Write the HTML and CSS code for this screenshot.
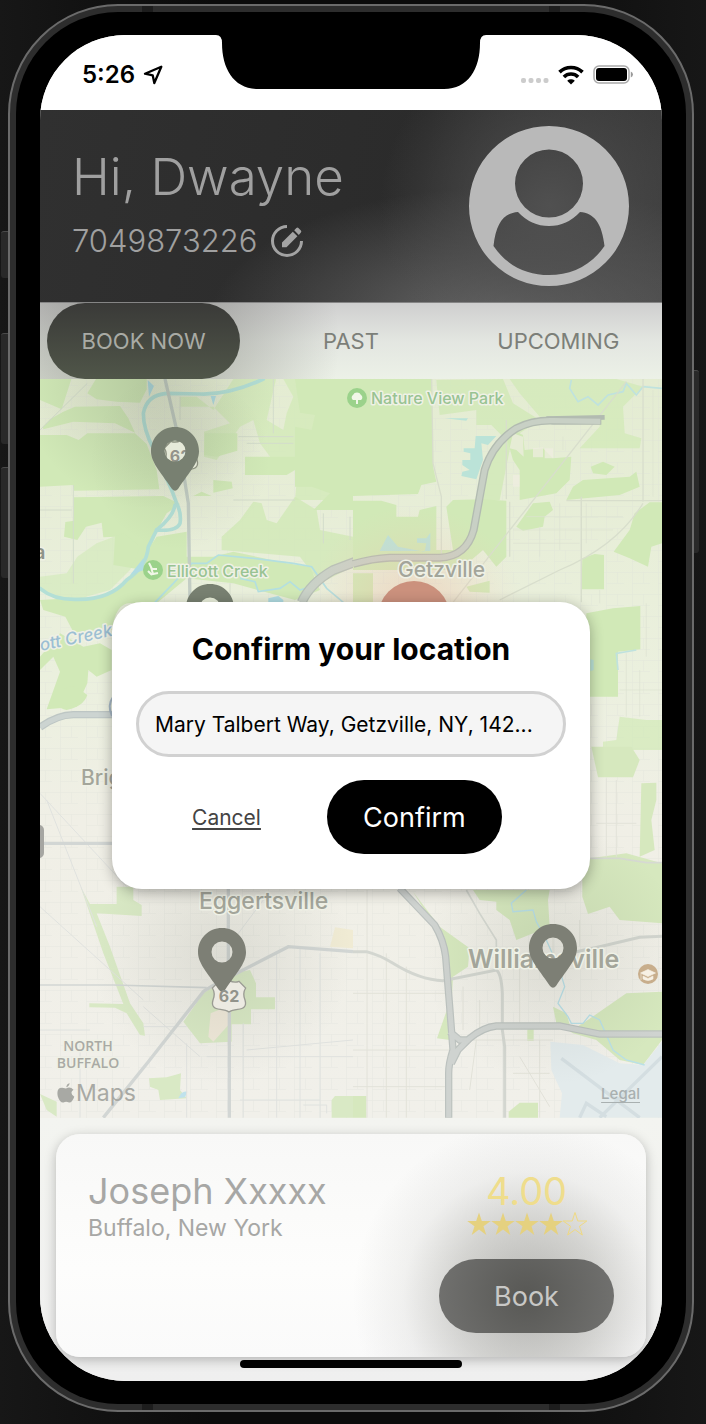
FILE: index.html
```html
<!DOCTYPE html>
<html lang="en">
<head>
<meta charset="utf-8">
<meta name="viewport" content="width=device-width, initial-scale=1">
<title>Confirm your location</title>
<link rel="stylesheet" href="styles.css">
</head>
<body>
<div class="phone">
  <span class="side side-mute"></span>
  <span class="side side-up"></span>
  <span class="side side-down"></span>
  <span class="side side-power"></span>
  <span class="band band-tl"></span><span class="band band-tr"></span>
  <span class="band band-bl"></span><span class="band band-br"></span>
  <div class="bezel">
    <div class="screen">
      <svg class="notch" viewBox="0 0 270 54" aria-hidden="true"><path d="M0 0H270Q264 0 264 8C264 34 252 54 228 54H42C18 54 6 34 6 8Q6 0 0 0Z"/></svg>

      <div class="status">
        <div class="status-time">
          <span>5:26</span>
          <svg width="20" height="20" viewBox="0 0 20 20" aria-hidden="true"><path d="M18.300 1.700 2 8.700 9.700 10.300 11.300 18Z" fill="none" stroke="#000" stroke-width="2.300" stroke-linejoin="round"/></svg>
        </div>
        <div class="status-icons">
          <svg width="28" height="6" viewBox="0 0 28 6" aria-hidden="true"><g fill="#ccc"><rect width="5" height="5" rx="2"/><rect x="7.500" width="5" height="5" rx="2"/><rect x="15" width="5" height="5" rx="2"/><rect x="22.500" width="5" height="5" rx="2"/></g></svg>
          <svg class="wifi" width="26" height="20" viewBox="0 0 26 20" aria-hidden="true"><g fill="none" stroke="#000" stroke-width="3.600"><path d="M1.500 7.100a16.500 16.500 0 0 1 23 0"/><path d="M5.900 12a10 10 0 0 1 14.200 0"/></g><path d="M9.200 15.700a5.600 5.600 0 0 1 7.600 0L13 19.500Z"/></svg>
          <svg width="41" height="20" viewBox="0 0 41 20" aria-hidden="true"><rect x="1" y="1" width="35" height="17" rx="5" fill="none" stroke="#a9a9a9" stroke-width="1.500"/><rect x="3" y="3" width="31" height="13" rx="3"/><path d="M37.800 6.500q2.200.8 2.200 3t-2.200 3Z" fill="#999"/></svg>
        </div>
      </div>

      <header class="profile">
        <div class="profile-text">
          <h1>Hi, Dwayne</h1>
          <div class="profile-phone">
            <span>7049873226</span>
            <button class="edit" aria-label="Edit phone number">
              <svg width="34" height="34" viewBox="0 0 34 34" aria-hidden="true"><path d="M17 2.500A14.500 14.500 0 1 0 31.500 17" fill="none" stroke="#a3a3a3" stroke-width="3"/><path d="M12 23.300V18.500L22.800 7.700 27.400 12.300 16.500 23.300ZM24.200 6.300 26.400 4q1-.9 2 0l2.500 2.500q.9 1 0 2L28.800 10.900Z" fill="#a3a3a3"/></svg>
            </button>
          </div>
        </div>
        <svg class="avatar" viewBox="0 0 160 160" role="img" aria-label="Profile picture"><path fill="#b9b9b9" fill-rule="evenodd" d="M80 0a80 80 0 1 1 0 160a80 80 0 1 1 0-160ZM80 23.500a34 34 0 1 0 0 68a34 34 0 1 0 0-68ZM49 86C35 87 27 97 24.500 120C38 140 58 149 80 149S122 140 135.500 120C133 97 125 87 111 86Q98 100 80 100T49 86Z"/></svg>
      </header>

      <nav class="tabs">
        <button class="tab tab-active">BOOK NOW</button>
        <button class="tab">PAST</button>
        <button class="tab">UPCOMING</button>
      </nav>

      <section class="map" aria-label="Map">
        <svg class="map-art" viewBox="40 379 622 739" preserveAspectRatio="xMidYMid slice" aria-hidden="true">
          <defs>
            <linearGradient id="land" x1="0" y1="0" x2="0" y2="1">
              <stop offset="0" stop-color="#e4ecd2"/><stop offset=".4" stop-color="#ebf0de"/><stop offset=".6" stop-color="#f0efe6"/><stop offset="1" stop-color="#f1f0ea"/>
            </linearGradient>
            <radialGradient id="dim"><stop offset="0" stop-color="#444a3c" stop-opacity=".2"/><stop offset="1" stop-color="#444a3c" stop-opacity="0"/></radialGradient>
            <radialGradient id="warm"><stop offset="0" stop-color="#f2a58c" stop-opacity=".4"/><stop offset="1" stop-color="#f2c8b4" stop-opacity="0"/></radialGradient>
            <pattern id="streets" width="26" height="22" patternUnits="userSpaceOnUse"><path d="M0 .5H26M8.500 0V22M19.500 0V11M8 11.500H26" fill="none" stroke="#dcdfd8" stroke-width=".6"/></pattern>
            <path id="pin" d="M0-24C13.500-24 24-13.500 24 0C24 11 16 19 3 38Q0 41.500-3 38C-16 19-24 11-24 0C-24-13.500-13.500-24 0-24ZM0-10.500A10.500 10.500 0 1 0 0 10.500A10.500 10.500 0 1 0 0-10.500Z" fill-rule="evenodd"/>
            <path id="shield" d="M-30-44Q-16-38 0-47Q16-38 30-44L50-24Q40-8 48 12Q56 38 26 40Q8 42 0 48Q-8 42-26 40Q-56 38-48 12Q-40-8-50-24Z"/>
          </defs>
          <rect x="40" y="379" width="622" height="739" fill="url(#land)"/>
          <rect x="40" y="379" width="622" height="739" fill="url(#streets)" opacity=".45"/>

          <g transform="translate(0 370) scale(.333333)">
            <g fill="#d1e9b7">
              <path d="M120 27H214L185 118 120 90Z"/><path d="M288 27H440V58L420 98 350 95 290 88 262 70Z"/><path d="M128 170 150 148 190 125 225 110 360 108 385 145 405 188 345 160 220 155 130 178Z"/>
              <path d="M120 195H200L236 210 262 190H405L440 222 470 300 478 358 222 362 218 345 120 350Z"/><path d="M222 382 490 378 540 402 500 430 472 480 430 600 340 585 345 500 310 502 305 458 258 470 232 510 192 500 196 456 222 452Z"/>
              <path d="M300 680C390 650 430 560 470 500L560 485V560L640 560 700 545 860 580 930 590 960 660 885 690 700 640 560 625 470 700H400Q350 690 335 780H300L222 790 196 740 130 720 120 690Z"/><path d="M120 620 200 610 232 560 290 520 370 490 420 530 390 600 330 660 190 700 120 660Z" opacity=".6"/>
              <path d="M540 80H590L640 120 700 27H828L800 150 850 180 860 130 880 80 850 27H1059V390H885L895 280 840 300 780 220 760 150 720 170 650 270 612 260V185L690 160 640 110 540 110Z" opacity=".75"/><path d="M615 190H712V242L650 260 612 255Z"/><path d="M735 260H885V300L860 315H735Z"/><path d="M640 330 695 335 698 355 640 368Z"/><path d="M580 378 605 365 635 378Z"/>
              <path d="M1059 27H885L900 128 945 135 935 180 885 170V350L935 350 990 370 940 420 1059 420Z"/><path d="M665 500 720 450 760 395 785 400 800 450 830 460 885 380 950 420 960 480 1059 500V590L960 640 900 560 665 540Z" opacity=".8"/>
              <path d="M120 860 180 790 250 830 300 820 335 840V900L290 920 265 900 262 940 230 1010 140 1018 180 905 160 860 120 900Z"/><path d="M160 980Q190 950 225 948L262 975Q250 1010 200 1020 160 1010 160 980Z"/>
            </g>
            <g fill="none" stroke="#b3dfd6" stroke-width="11" stroke-linecap="round"><path d="M790 27Q690 75 600 72L500 70Q440 75 430 130 430 180 462 240L515 360 530 400Q545 430 540 460 530 485 470 480L445 530Q440 590 380 630 330 690 230 688 160 690 120 655"/><path d="M525 405Q520 440 470 480"/></g>
            <g fill="none" stroke="#b3dfe0" stroke-width="5"><path d="M465 697 520 640 575 580 620 580 655 555 760 565 880 580 935 590 980 655 1030 697M720 625 765 635 775 665 840 655 870 635 900 660 930 650"/></g>
            <path d="M443 30 462 48 447 80ZM632 78H648L640 105ZM390 615 430 565 432 600ZM805 697V685L835 678 850 690V697Z" fill="#b0dce2"/>
            <g fill="none" stroke="#d3dccb" stroke-width="3"><path d="M120 180 262 40M220 345V640M120 420H215M715 200H880M740 220H880M700 390H885M540 80V150M970 430V520M1050 440V510M690 640V697M820 27V190"/></g>
            <path d="M495 27 530 180 565 400 570 697" fill="none" stroke="#c3cdc4" stroke-width="10"/>
            <path d="M905 697Q930 640 1000 600L1080 570" fill="none" stroke="#b7c0b7" stroke-width="30"/><path d="M905 697Q930 640 1000 600L1080 570" fill="none" stroke="#c9d1c7" stroke-width="22"/>
            <path d="M120 1072Q170 1035 220 1034H345" fill="none" stroke="#bdc6c4" stroke-width="22"/><path d="M120 1072Q170 1035 220 1034H345" fill="none" stroke="#ccd4d1" stroke-width="15"/>
          </g>

          <g transform="translate(353 370) scale(.333333)">
            <g fill="#d1e9b7">
              <path d="M0 27H236L240 290 250 335 205 345 195 372 0 378Z"/><path d="M0 392H85L130 405V440H195L200 420 250 408 250 540 300 540 280 410 300 390 390 388 460 392V560L430 590 390 540 320 600 0 600Z"/>
              <path d="M250 30 450 27 480 100 560 150 500 190 470 240 440 390H390L410 270 450 200 415 165H370V120L260 135Z" opacity=".8"/><path d="M460 200 480 180 510 195 515 240 570 235 600 265 655 260 650 330 610 370 500 390V300L480 270Z"/><path d="M470 27H790L870 50 810 110 815 190 865 205 860 235 680 235 740 170 740 140 560 140 500 70Z" opacity=".75"/>
              <path d="M640 390 660 350 690 330 830 320 850 305 860 350 800 375Z"/><path d="M713 290 750 275 785 290 760 315 720 310Z"/><path d="M490 470 540 400 590 395 600 420 575 440 570 470 510 482Z"/><path d="M890 397H927V520L895 530 885 590 830 565 782 545 830 480 845 430Z"/><path d="M688 565 725 552 753 555V658H685Z"/><path d="M700 730 780 715 862 708V838L795 845V980H700Z"/><path d="M340 650 410 632V668L350 665ZM0 610H60V697H0Z"/><path d="M800 1040 880 1050 927 1050V1140H750V1115L790 1110Z" opacity=".7"/>
            </g>
            <g fill="#f0eee2" opacity=".7"><path d="M480 190 510 200 512 260 490 240 470 235Z"/><path d="M540 235 570 232V262H540ZM575 235H600V265H575ZM480 315H500V350H480Z"/></g>
            <path d="M368 198H430L405 225 385 220 390 270 370 328 325 318 328 305 350 300 328 285V270H352V250L332 245V235H365ZM275 145H345L340 152ZM80 543 105 495 135 530 215 545 220 520 192 518V505H220L232 488V543ZM712 868 722 870V900L712 904Z" fill="#bbe3d8"/>
            <g fill="none" stroke="#bfe2de" stroke-width="5"><path d="M655 30 650 55 675 95 705 80 735 105 765 75 810 65 820 40 850 75 870 50 927 55M795 900 790 850 850 840"/></g>
            <g fill="none" stroke="#d8decc" stroke-width="4"><path d="M236 27 240 280 265 380V600M820 35 300 697M685 380V697M870 27V395M470 395V560M870 400Q790 530 620 600L440 690M460 150V388M640 392H927"/></g>
            <g fill="none" stroke="#dce2d2" stroke-width="2"><path d="M480 480H780M520 440H810M480 520H680M560 470V560M620 400V540M700 400V520M740 660V700M630 240V200M900 60V380M820 850V1040M860 900V1040M800 960H927M880 700V860"/></g>
            <path d="M0 582Q60 565 110 563H260Q340 560 362 480L395 300Q420 220 490 175 540 150 600 152L745 152" fill="none" stroke="#b2bbb1" stroke-width="24"/><path d="M580 146 755 142" fill="none" stroke="#b2bbb1" stroke-width="14"/>
            <path d="M-5 583Q60 565 110 563H260Q340 560 362 480L395 300Q420 220 490 175 540 150 600 152L742 154" fill="none" stroke="#c8d0c5" stroke-width="16"/>
          </g>

          <g transform="translate(0 740) scale(.333333)">
            <g fill="#d9e9c5"><path d="M350 440H400V480L425 495V528L290 520 330 620 390 790 430 850 435 887 420 885 380 820 345 803 268 802V790L370 792 310 640 242 440 270 492H350Z"/><path d="M700 700 750 690 768 730V772H825V808H753V853H695V905L600 910 550 845 610 760Z"/><path d="M447 1015 500 1012 543 1000 540 1050 560 1075 480 1080 475 1050 450 1040Z"/><path d="M120 1062 170 1085V1130L140 1110ZM1005 1068H1059V1133H995V1080Z"/></g>
            <path d="M1005 562 1059 570V625L990 620Z" fill="#f0ebd4"/><path d="M632 820 680 800 690 850 640 905 625 890Z" fill="#f0e9da"/>
            <path d="M535 1075Q545 1050 562 1055L555 1072Z" fill="#c0e2ec"/>
            <g fill="none" stroke="#e0e2df" stroke-width="3"><path d="M120 160 380 440M140 180 290 560M120 500 430 780M700 600 790 480M430 800 600 950M240 900V1133M730 850V1133M830 640V1133M560 910V1133M900 620V1133M960 640V1133M620 950H1059M120 870H270M430 860H560M740 930 1059 900M720 1080 960 1080M910 1095H980V1120"/></g>
            <g fill="none" stroke="#d2d6d4" stroke-width="10"><path d="M132 310H345M685 440V700M688 815V1133"/><path d="M1059 635 865 620 710 700Q630 740 610 755L445 965 310 1133"/></g>
            <path d="M120 735 340 735 620 743" fill="none" stroke="#d2d6d4" stroke-width="5"/>
          </g>

          <g transform="translate(353 740) scale(.333333)">
            <g fill="#d6e8be"><path d="M715 20H835L860 60 840 112H735Z"/><path d="M865 130 910 128 910 180 895 240 905 330 860 350ZM712 355 820 340 927 370V550L800 540 770 500 705 522 688 470V400Z"/><path d="M360 450H590L585 480 590 560 490 600 470 540 430 510V485L380 480Z"/><path d="M180 455 260 560 350 625 345 680 300 710 290 900 252 895 285 800 270 600Z"/><path d="M600 800 640 820 655 870 690 850 820 760 927 755V900L870 975 800 960 730 900 660 880 610 850Z"/><path d="M0 1068H40V1133H0ZM467 1115 500 1088H555V1133H467ZM523 868H542V903H523Z"/></g>
            <path d="M592 905 690 915 800 970 870 975 927 905V1133H620L627 1060 595 990Z" fill="#e3ebec"/>
            <g fill="none" stroke="#d4dee1" stroke-width="10"><path d="M625 955 860 1133M927 950 740 1133M680 1133 700 1090 760 1130"/></g>
            <g fill="none" stroke="#b9e0e8" stroke-width="4"><path d="M520 450 475 490 480 515 540 510 550 545 580 600 620 690 635 740 615 790 645 830 655 850 690 850 710 825 740 840 780 930 820 960 875 975"/></g>
            <g fill="none" stroke="#e2e2d9" stroke-width="3"><path d="M42 450V1133M100 640V1133M160 680V1133M0 760H280M0 930H290M0 1040H280M330 740V870M380 780V870M500 640V850M560 900V1133M600 560V650M680 540V620M760 115V350M790 120V350M730 250H850M330 900H600M480 1000H590M500 950 590 1100M370 900 350 1050"/></g>
            <g fill="none" stroke="#d3d6d0" stroke-width="9"><path d="M0 635H40Q80 645 120 670 200 720 270 722L430 690Q445 700 448 760V870L455 920V1133"/><path d="M670 635 740 620 860 592 927 589"/></g><path d="M340 450 380 520 430 600V690M712 355 800 355 880 368H927" fill="none" stroke="#d6d9d2" stroke-width="5"/>
            <path d="M140 445 245 555Q272 600 278 650L290 800 300 930Q287 970 287 1000V1133M927 882H740L620 858H430Q390 862 350 895L315 930 295 970M290 875 320 900H350" fill="none" stroke="#bcc2bf" stroke-width="22"/>
            <path d="M140 445 245 555Q272 600 278 650L290 800 300 930Q287 970 287 1000V1133M927 882H740L620 858H430Q390 862 350 895L315 930 295 970M290 875 320 900H350" fill="none" stroke="#cfd3d0" stroke-width="15"/>
          </g>

          <circle cx="150" cy="379" r="130" fill="url(#dim)"/><circle cx="180" cy="460" r="90" fill="url(#dim)" opacity=".5"/>
          <circle cx="222" cy="955" r="130" fill="url(#dim)" opacity=".6"/><circle cx="553" cy="955" r="130" fill="url(#dim)" opacity=".6"/>
          <circle cx="414" cy="615" r="110" fill="url(#warm)"/>

          <g class="label-park"><text x="371" y="404">Nature View Park</text><text x="167" y="577">Ellicott Creek</text></g>
          <circle cx="357" cy="398" r="10" fill="#9bd28b"/><path d="M356 404V400H353A3 3 0 0 1 353 395A4.500 4.500 0 0 1 361 395A3 3 0 0 1 361 400H358V404Z" fill="#f1f7e8"/>
          <circle cx="153" cy="570" r="10" fill="#9bd28b"/><path d="M149 563 152 569 157 569M151 567 153 574 158 573M148 571 152 575" fill="none" stroke="#f1f7e8" stroke-width="2"/>
          <text class="label-creek" transform="translate(41 651) rotate(-12)">ott Creek</text>
          <g class="label-town"><text x="398" y="577">Getzville</text><text x="81" y="785">Brighton</text><text class="town-mid" x="199" y="909">Eggertsville</text><text class="town-big" x="468" y="968">Williamsville</text></g>
          <text class="label-edge" x="34" y="559">a</text>
          <g class="label-area"><text x="88" y="1051">NORTH</text><text x="88" y="1068">BUFFALO</text></g>
          <rect x="30" y="825" width="14" height="33" rx="5" fill="#a6a6a2"/>
          <path d="M113 697Q107 705 112 716" fill="none" stroke="#a5b6c4" stroke-width="2"/>
          <circle cx="648" cy="974" r="10" fill="#c8ae8c"/><path d="M640.500 973 648 969.500 655.500 973 648 976.500ZM643 976 648 978.500 653 976V979Q648 982 643 979ZM641 974V980" fill="#f7f1e5" stroke="#f7f1e5" stroke-width=".6"/>

          <g transform="translate(181 456) scale(.3333)" fill="#e6ead9" stroke="#8b907f" stroke-width="4"><use href="#shield"/></g>
          <g transform="translate(229 996) scale(.3333)" fill="#eceae2" stroke="#9a9b93" stroke-width="4"><use href="#shield"/></g>
          <text class="label-route" x="180" y="462">62</text>
          <g fill="#7d7f75"><use href="#pin" x="175" y="451" fill="#788071"/><use href="#pin" x="210" y="608" fill="#788071"/><use href="#pin" x="222" y="952"/><use href="#pin" x="553" y="948"/></g>
          <text class="label-route" x="229" y="1002">62</text>
          <circle cx="414" cy="617" r="36" fill="#cb917d"/>
        </svg>
        <div class="map-brand">
          <svg width="18" height="20" viewBox="0 0 18 20" aria-hidden="true"><path d="M12.500 0Q12.500 3 9.500 4.300 8.800 1.500 12.500 0ZM9 5.500Q13 3 16.500 6.700 12 10 17.300 13.800 15 20 12 19.500 9 18 6.500 19.500 3 20 .8 13.500-1 4.500 5.200 4.700Z"/></svg>
          <span>Maps</span>
        </div>
        <a class="map-legal" href="#legal">Legal</a>
      </section>

      <main class="results">
        <article class="card">
          <div class="provider">
            <h2>Joseph Xxxxx</h2>
            <p>Buffalo, New York</p>
          </div>
          <div class="booking">
            <span class="score">4.00</span>
            <svg class="stars" viewBox="0 0 120 24" role="img" aria-label="4 out of 5 stars">
              <defs><path id="star" d="M12 .5 14.800 9H23.800L16.500 14.200 19.300 23 12 17.600 4.700 23 7.500 14.200.2 9H9.200Z"/></defs>
              <g fill="#e5d17f"><use href="#star"/><use href="#star" x="24"/><use href="#star" x="48"/><use href="#star" x="72"/></g>
              <use href="#star" x="96" fill="none" stroke="#efd982" stroke-width="1"/>
            </svg>
            <button class="book">Book</button>
          </div>
        </article>
        <span class="home-bar"></span>
      </main>

      <div class="overlay">
        <form class="dialog" role="dialog" aria-labelledby="dialog-title" onsubmit="return false">
          <h2 id="dialog-title"><label for="place">Confirm your location</label></h2>
          <input id="place" type="text" value="Mary Talbert Way, Getzville, NY, 142...">
          <div class="dialog-actions">
            <button class="cancel" type="button">Cancel</button>
            <button class="confirm" type="submit">Confirm</button>
          </div>
        </form>
      </div>
    </div>
  </div>
</div>
</body>
</html>
```
FILE: styles.css
```css
* { box-sizing: border-box; }
body {
  margin: 0;
  padding: 4px 12px 12px 8px;
  background: linear-gradient(90deg, #171717, #0b0b0b 30%, #0b0b0b 70%, #171717);
  font-family: Inter, "Liberation Sans", sans-serif;
  color: #000;
}
h1, h2, p { margin: 0; font-weight: 400; }
button { border: 0; padding: 0; background: none; color: inherit; font: inherit; cursor: pointer; }

/* device frame */
.phone {
  position: relative;
  border: 2px solid #6b6b6b;
  border-radius: 110px;
  padding: 6px;
  background: #2d2d2d;
}
.bezel { padding: 23px 24px; border-radius: 102px; background: #000; }
.side { position: absolute; left: -9px; width: 7px; background: #292929; border-top: 1px solid #4a4a4a; border-radius: 3px 0 0 3px; }
.side-mute { top: 225px; height: 47px; }
.side-up { top: 327px; height: 111px; }
.side-down { top: 461px; height: 111px; }
.side-power { top: 364px; left: auto; right: -7px; width: 5px; height: 183px; border-radius: 0 3px 3px 0; }
.band { position: absolute; width: 11px; height: 6px; background: #1d1d1d; }
.band-tl { top: 0; left: 132px; }
.band-tr { top: 0; right: 132px; }
.band-bl { bottom: 0; left: 132px; }
.band-br { bottom: 0; right: 132px; }

.screen {
  position: relative;
  display: flex;
  flex-direction: column;
  overflow: hidden;
  border-radius: 85px;
  background: #f4f4f1;
}
.notch { position: absolute; top: 0; left: 50%; width: 270px; margin-left: -135px; }

.status { display: flex; justify-content: space-between; height: 75px; padding: 4px 28px 0 42px; background: #fff; }
.status-time, .status-icons { display: flex; align-items: center; }
.status-time { gap: 8px; font-size: 24px; font-weight: 600; }
.status-icons { gap: 9px; }
.status-icons svg:first-child { margin-top: 12px; }

/* profile header */
.profile {
  display: flex;
  justify-content: space-between;
  align-items: center;
  height: 193px;
  padding: 0 33px 0 32px;
  border-bottom: 1px solid #858585;
  background:
    radial-gradient(circle at 82% 50%, #505050, #50505000 170px),
    radial-gradient(ellipse at 75% 110%, #6a6a6a, #6a6a6a00 45%),
    linear-gradient(100deg, #303030, #2b2b2b 60%, #3a3a3a);
  color: #a0a0a0;
}
.profile-text { padding-bottom: 6px; }
.profile h1 { font-size: 51px; line-height: 64px; font-weight: 300; white-space: nowrap; }
.profile-phone { display: flex; align-items: center; gap: 13px; font-size: 31px; line-height: 40px; font-weight: 300; margin-top: 12px; }
.edit { display: flex; }
.avatar { width: 160px; height: 160px; flex: none; }

.tabs {
  display: grid;
  grid-template-columns: repeat(3, 1fr);
  background:
    radial-gradient(circle at 16% 50%, #30302866, #30302800 200px),
    linear-gradient(#cfcfcf, #e3e6e1 50%, #ecf1e7);
  color: #7c7f79;
  font-size: 22px;
}
.tab { height: 76px; margin: 0 7px; border-radius: 38px; }
.tab-active { background: linear-gradient(#3a3a38, #505649); color: #a9aba5; }

.map { position: relative; display: flex; }
.map-art { width: 100%; min-height: 739px; display: block; }
.map-art text { font-family: Inter, sans-serif; font-weight: 500; paint-order: stroke; stroke: #eff1e6; stroke-width: 3px; stroke-linejoin: round; }
.label-park { fill: #98c392; font-size: 16px; }
.label-creek { fill: #9cbfd3; font-size: 17px; font-style: italic; }
.label-town { fill: #a3a59a; font-size: 21px; }
.map-art .town-mid { font-size: 23px; }
.map-art .town-big { font-size: 25px; font-weight: 600; }
.map-art .label-edge { fill: #8f9489; font-size: 20px; font-weight: 600; }
.map-art .label-area text { font-family: "Open Sans", sans-serif; font-size: 14px; font-weight: 600; fill: #a9aaa4; text-anchor: middle; }
.map-art .label-route { font-size: 16px; font-weight: 700; fill: #92938b; stroke: none; text-anchor: middle; }
.map-brand { position: absolute; left: 17px; bottom: 11px; display: flex; align-items: center; gap: 1px; font-size: 23px; line-height: 28px; color: #a8a9a4; fill: #a8a9a4; }
.map-legal { position: absolute; right: 22px; bottom: 14px; font-size: 15px; line-height: 20px; font-weight: 500; color: #a9b0b0; text-underline-offset: 3px; }

/* result card */
.results { padding: 16px 16px 13px; background: linear-gradient(#f3f4f0, #efefef); }
.card {
  display: flex;
  justify-content: space-between;
  padding: 36px 32px 24px;
  border-radius: 24px;
  background:
    radial-gradient(circle at 80% 73%, #6a6a6480, #7777704d 75px, #9999951f 125px, #99999500 175px),
    linear-gradient(#f8f8f7, #fdfdfc 60%, #fafafa);
  box-shadow: 0 3px 12px #00000040;
  color: #a7a7a5;
}
.provider h2 { font-size: 36px; line-height: 42px; }
.provider p { font-size: 23px; line-height: 32px; }
.booking { display: flex; flex-direction: column; align-items: center; width: 175px; }
.score { font-size: 38px; line-height: 42px; color: #efdd8c; }
.stars { width: 120px; height: 24px; }
.book, .confirm { width: 175px; height: 74px; border-radius: 37px; font-size: 27px; }
.book { margin-top: 23px; background: radial-gradient(circle, #585855, #727270); color: #c8c8c6; }
.home-bar { display: block; width: 222px; height: 8px; margin: 3px auto 0; border-radius: 4px; background: #000; position: relative; }

/* confirmation dialog */
.overlay { position: absolute; inset: 0; display: flex; align-items: center; justify-content: center; padding: 75px 72px 0; }
.dialog {
  width: 100%;
  padding: 24px 24px 35px;
  border-radius: 30px;
  background: #fff;
  box-shadow: 0 3px 14px #00000050;
}
.dialog h2 { font-size: 30px; line-height: 46px; font-weight: 700; text-align: center; }
.dialog input {
  display: block;
  width: 100%;
  height: 66px;
  margin: 19px 0 23px;
  padding: 0 16px;
  border: 3px solid #d1d1d1;
  border-radius: 33px;
  background: #f5f5f5;
  font: 21px Inter, sans-serif;
  color: #000;
}
.dialog-actions { display: flex; align-items: center; justify-content: center; gap: 66px; padding-right: 8px; }
.cancel { font-size: 21px; color: #444; text-decoration: underline; text-underline-offset: 3px; }
.confirm { background: #000; color: #fff; }
```
